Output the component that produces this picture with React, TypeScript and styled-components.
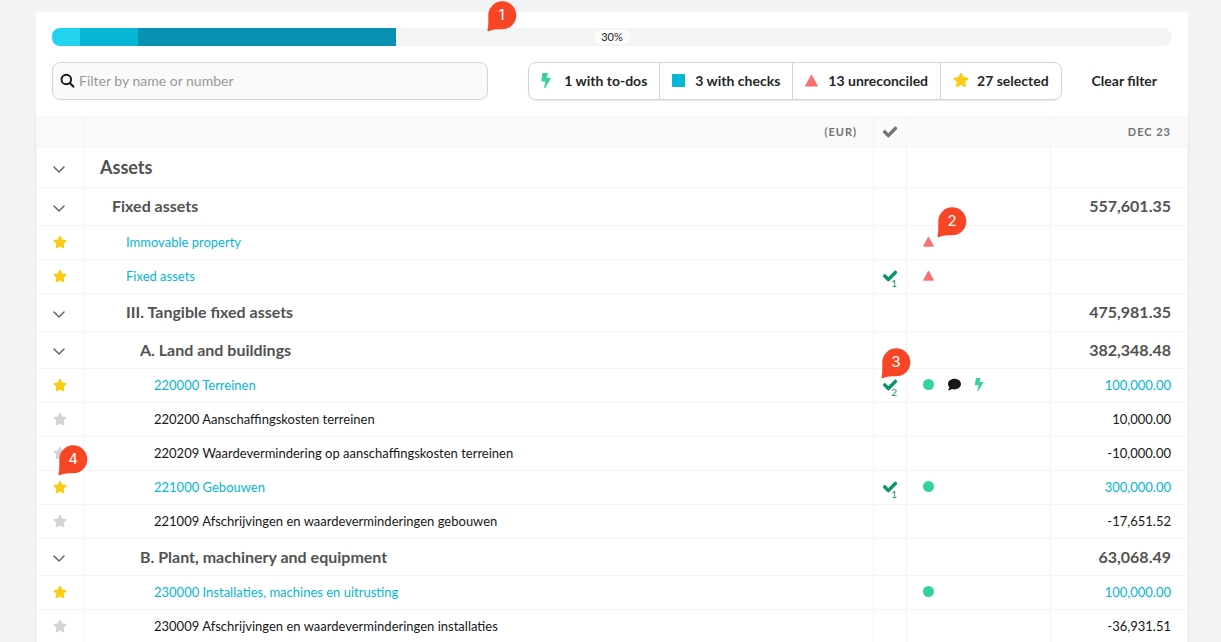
import React from "react";
import styled, { createGlobalStyle } from "styled-components";
import { FaCheck, FaComment, FaStar } from "react-icons/fa";

const colors = {
  page: "#f1f3f5",
  line: "#f4f4f4",
  border: "#d4d4d4",
  soft: "#fafafa",
  ink: "#262626",
  heading: "#525252",
  muted: "#737373",
  link: "#06b6d4",
  green: "#34d399",
  check: "#059669",
  red: "#f87171",
  yellow: "#facc15",
  pin: "#f84525",
};

const GlobalStyle = createGlobalStyle`
  *, *::before, *::after { box-sizing: border-box; }
  body {
    margin: 0;
    background: ${colors.page};
    color: ${colors.ink};
    font-family: Lato, "Liberation Sans", sans-serif;
    font-size: 14px;
  }
  button, input { font: inherit; color: inherit; }
`;

const Page = styled.main`
  padding: 12px 33px 0 36px;
  height: 100vh;
  overflow: hidden;
`;

const Card = styled.section`
  background: #fff;
`;

const Tools = styled.div`
  display: flex;
  flex-direction: column;
  gap: 16px;
  padding: 16px;
`;

const Progress = styled.div`
  position: relative;
  display: flex;
  height: 18px;
  border-radius: 9px;
  background: ${colors.line};
`;

const Segment = styled.span<{ $share: number; $color: string }>`
  width: ${(p) => p.$share}%;
  background: ${(p) => p.$color};
  &:first-child {
    border-radius: 8px 0 0 8px;
  }
`;

const Percent = styled.span`
  position: absolute;
  inset: 2px 0;
  margin: auto;
  width: 37px;
  border-radius: 7px;
  background: #fcfcfc;
  font-size: 11px;
  line-height: 14px;
  text-align: center;
`;

const Bar = styled.div`
  display: flex;
  height: 38px;
`;

const SearchBox = styled.label`
  flex: 1;
  display: flex;
  align-items: center;
  gap: 3px;
  margin-right: 40px;
  padding: 0 7px 2px;
  border: 1px solid ${colors.border};
  border-radius: 8px;
  background: ${colors.soft};
`;

const SearchInput = styled.input`
  flex: 1;
  min-width: 0;
  padding: 0;
  border: 0;
  outline: 0;
  background: transparent;
  font-size: 14px;
  &::placeholder {
    color: #999;
    opacity: 1;
  }
`;

const FilterGroup = styled.div`
  display: flex;
  border: 1px solid ${colors.border};
  border-radius: 8px;
  box-shadow: 0 1px 1px rgba(0, 0, 0, 0.08);
`;

const FilterButton = styled.button`
  display: flex;
  align-items: center;
  gap: 8px;
  padding: 0 12px 2px;
  border: 0;
  background: transparent;
  font-size: 14px;
  font-weight: 700;
  white-space: nowrap;
  & + & {
    border-left: 1px solid ${colors.border};
  }
`;

const FilterIcon = styled.span<{ $color: string }>`
  display: flex;
  min-width: 15px;
  color: ${(p) => p.$color};
`;

const ClearButton = styled.button`
  margin-left: 15px;
  padding: 0 15px 2px;
  border: 0;
  background: transparent;
  font-size: 14px;
  font-weight: 700;
  white-space: nowrap;
`;

const Ledger = styled.table`
  width: 100%;
  table-layout: fixed;
  border-collapse: separate;
  border-spacing: 0;
  border-top: 1px solid ${colors.line};
  border-left: 1px solid ${colors.line};
  box-shadow: 1px 0 0 #ebedef, -1px 0 0 #ebedef;
`;

const Col = styled.col<{ $width?: number }>`
  width: ${(p) => (p.$width ? `${p.$width}px` : "auto")};
`;

const HeadCell = styled.th<{ $align?: string }>`
  height: 31px;
  padding: 0 16px 1px;
  border-right: 1px solid ${colors.line};
  border-bottom: 1px solid ${colors.line};
  background: ${colors.soft};
  color: ${colors.muted};
  font-size: 11px;
  font-weight: 700;
  letter-spacing: 1px;
  text-align: ${(p) => p.$align ?? "left"};
  &:nth-child(3) {
    padding: 0;
  }
  svg {
    display: block;
    margin: 0 auto;
  }
`;

const Row = styled.tr<{ $height: number }>`
  height: ${(p) => p.$height}px;
`;

const Cell = styled.td`
  position: relative;
  padding: 0 0 2px;
  border-right: 1px solid ${colors.line};
  border-bottom: 1px solid ${colors.line};
`;

type Kind = "title" | "group" | "account";
const nameSize = { title: 18, group: 16, account: 13 };

const NameCell = styled(Cell)<{ $indent: number; $kind: Kind }>`
  padding-left: ${(p) => p.$indent}px;
  color: ${(p) => (p.$kind === "account" ? "#171717" : colors.heading)};
  font-size: ${(p) => nameSize[p.$kind]}px;
  font-weight: ${(p) => (p.$kind === "account" ? 400 : 700)};
  white-space: nowrap;
`;

const AmountCell = styled(Cell)<{ $kind: Kind; $linked?: boolean }>`
  padding-right: 16px;
  color: ${(p) =>
    p.$linked ? colors.link : p.$kind === "account" ? "#171717" : colors.heading};
  font-size: ${(p) => nameSize[p.$kind]}px;
  font-weight: ${(p) => (p.$kind === "account" ? 400 : 700)};
  text-align: right;
`;

const AccountLink = styled.a`
  color: ${colors.link};
  text-decoration: none;
`;

const RowButton = styled.button<{ $color: string }>`
  display: flex;
  margin: 0 auto;
  padding: 0;
  border: 0;
  background: transparent;
  color: ${(p) => p.$color};
`;

const CheckMark = styled.span`
  position: relative;
  display: flex;
  justify-content: center;
  color: ${colors.check};
`;

const CheckCount = styled.span`
  position: absolute;
  top: 8px;
  right: 9px;
  font-size: 10px;
  line-height: 12px;
`;

const Signals = styled.div`
  display: flex;
  align-items: center;
  gap: 14px;
  padding-left: 16px;
`;

const PinMark = styled.span<{ $left: string; $top: number }>`
  position: absolute;
  z-index: 1;
  left: ${(p) => p.$left};
  top: ${(p) => p.$top}px;
  width: 30px;
  height: 30px;
  color: #fff;
  font: 400 15px/28px Inter, sans-serif;
  text-align: center;
  svg {
    position: absolute;
    inset: 0;
    z-index: -1;
  }
`;

function Pin({ label, left, top }: { label: number; left: string; top: number }) {
  return (
    <PinMark $left={left} $top={top}>
      <svg width="30" height="30" viewBox="0 0 30 30" aria-hidden="true">
        <path
          d="M15.3 0.3a14 14 0 1 1 0 28c-5 0-9.500.2-13 1.600-1.500.6-2.300-.2-1.700-1.500C1.500 25 1.300 20 1.300 14.300a14 14 0 0 1 14-14z"
          fill={colors.pin}
        />
      </svg>
      {label}
    </PinMark>
  );
}

const SearchIcon = () => (
  <svg width="16" height="16" viewBox="0 0 16 16" fill="none" stroke="#171717" aria-hidden="true">
    <circle cx="6.300" cy="7.500" r="4.800" strokeWidth="1.900" />
    <path d="M9.800 11 13.300 14.500" strokeWidth="2.200" strokeLinecap="round" />
  </svg>
);

const Bolt = ({ width, height }: { width: number; height: number }) => (
  <svg
    width={width}
    height={height}
    viewBox="0 0 320 512"
    fill={colors.green}
    aria-hidden="true"
  >
    <path d="M296 160H180.600l42.600-129.800C227.200 15 215.700 0 200 0H56C44 0 33.800 8.900 32.200 20.800l-32 240C-1.700 275.200 9.500 288 24 288h118.700L96.600 482.500c-3.600 15.200 8 29.500 23.300 29.500 8.400 0 16.400-4.400 20.800-12l176-304c9.300-15.900-2.200-36-20.700-36z" />
  </svg>
);

const Triangle = ({ size = 11 }: { size?: number }) => (
  <svg width={size} height={size} viewBox="0 0 12 12" aria-hidden="true">
    <path
      d="M6 1.100 11.400 11.100H.6z"
      fill={colors.red}
      stroke={colors.red}
      strokeWidth="1"
      strokeLinejoin="round"
    />
  </svg>
);

const Square = () => (
  <svg width="13" height="13" viewBox="0 0 13 13" aria-hidden="true">
    <rect width="13" height="13" rx="1" fill={colors.link} />
  </svg>
);

const Dot = () => (
  <svg width="11" height="11" viewBox="0 0 11 11" aria-hidden="true">
    <circle cx="5.500" cy="5.500" r="5.500" fill={colors.green} />
  </svg>
);

const Chevron = () => (
  <svg width="14" height="14" viewBox="0 0 14 14" fill="none" aria-hidden="true">
    <path
      d="M1 7 6 12 11 7"
      stroke="#666"
      strokeWidth="1.500"
      strokeLinecap="round"
      strokeLinejoin="round"
    />
  </svg>
);

type Signal = "triangle" | "dot" | "comment" | "bolt";

const signalIcons: Record<Signal, React.ReactNode> = {
  triangle: <Triangle />,
  dot: <Dot />,
  comment: <FaComment size={13} color="#171717" />,
  bolt: <Bolt width={8} height={13} />,
};

interface Entry {
  kind: Kind;
  name: string;
  level: number;
  starred?: boolean;
  checks?: number;
  signals?: Signal[];
  amount?: string;
  pin?: { column: "star" | "check" | "signal"; label: number; left: number; top: number };
}

const entries: Entry[] = [
  { kind: "title", name: "Assets", level: 0 },
  { kind: "group", name: "Fixed assets", level: 1, amount: "557,601.35" },
  {
    kind: "account",
    name: "Immovable property",
    level: 2,
    starred: true,
    signals: ["triangle"],
    pin: { column: "signal", label: 2, left: 30, top: -19 },
  },
  { kind: "account", name: "Fixed assets", level: 2, starred: true, checks: 1, signals: ["triangle"] },
  { kind: "group", name: "III. Tangible fixed assets", level: 2, amount: "475,981.35" },
  { kind: "group", name: "A. Land and buildings", level: 3, amount: "382,348.48" },
  {
    kind: "account",
    name: "220000 Terreinen",
    level: 4,
    starred: true,
    checks: 2,
    signals: ["dot", "comment", "bolt"],
    amount: "100,000.00",
    pin: { column: "check", label: 3, left: 7, top: -21 },
  },
  { kind: "account", name: "220200 Aanschaffingskosten terreinen", level: 4, amount: "10,000.00" },
  {
    kind: "account",
    name: "220209 Waardevermindering op aanschaffingskosten terreinen",
    level: 4,
    amount: "-10,000.00",
  },
  {
    kind: "account",
    name: "221000 Gebouwen",
    level: 4,
    starred: true,
    checks: 1,
    signals: ["dot"],
    amount: "300,000.00",
    pin: { column: "star", label: 4, left: 21, top: -26 },
  },
  {
    kind: "account",
    name: "221009 Afschrijvingen en waardeverminderingen gebouwen",
    level: 4,
    amount: "-17,651.52",
  },
  { kind: "group", name: "B. Plant, machinery and equipment", level: 3, amount: "63,068.49" },
  {
    kind: "account",
    name: "230000 Installaties, machines en uitrusting",
    level: 4,
    starred: true,
    signals: ["dot"],
    amount: "100,000.00",
  },
  {
    kind: "account",
    name: "230009 Afschrijvingen en waardeverminderingen installaties",
    level: 4,
    amount: "-36,931.51",
  },
];

const indents = [16, 28, 42, 56, 70];

function rowHeight({ kind, level }: Entry) {
  if (kind === "title") return 40;
  if (kind === "group") return level > 2 ? 37 : 38;
  return 34;
}

function EntryRow({ entry }: { entry: Entry }) {
  const { kind, name, level, starred, checks, signals, amount, pin } = entry;
  const pinIn = (column: string) =>
    pin && pin.column === column ? (
      <Pin label={pin.label} left={`${pin.left}px`} top={pin.top} />
    ) : null;

  return (
    <Row $height={rowHeight(entry)}>
      <Cell>
        {kind === "account" ? (
          <RowButton
            type="button"
            $color={starred ? colors.yellow : colors.border}
            aria-label={`Select ${name}`}
            aria-pressed={!!starred}
          >
            <FaStar size={14} />
          </RowButton>
        ) : (
          <RowButton type="button" $color={colors.muted} aria-label={`Collapse ${name}`}>
            <Chevron />
          </RowButton>
        )}
        {pinIn("star")}
      </Cell>
      <NameCell $indent={indents[level]} $kind={kind}>
        {starred ? <AccountLink href="#">{name}</AccountLink> : name}
      </NameCell>
      <Cell>
        {checks && (
          <CheckMark>
            <FaCheck size={14} stroke="currentColor" strokeWidth={32} />
            <CheckCount>{checks}</CheckCount>
          </CheckMark>
        )}
        {pinIn("check")}
      </Cell>
      <Cell>
        {signals && (
          <Signals>
            {signals.map((signal) => (
              <React.Fragment key={signal}>{signalIcons[signal]}</React.Fragment>
            ))}
          </Signals>
        )}
        {pinIn("signal")}
      </Cell>
      <AmountCell $kind={kind} $linked={starred}>
        {amount}
      </AmountCell>
    </Row>
  );
}

const filters = [
  { label: "1 with to-dos", color: colors.green, icon: <Bolt width={10} height={15} /> },
  { label: "3 with checks", color: colors.link, icon: <Square /> },
  { label: "13 unreconciled", color: colors.red, icon: <Triangle size={13} /> },
  { label: "27 selected", color: colors.yellow, icon: <FaStar size={16} /> },
];

export default function App() {
  return (
    <>
      <GlobalStyle />
      <Page>
        <Card>
          <Tools>
            <Progress
              role="progressbar"
              aria-label="Progress"
              aria-valuenow={30}
              aria-valuemin={0}
              aria-valuemax={100}
            >
              <Segment $share={2.5} $color="#22d3ee" />
              <Segment $share={5.2} $color="#06b6d4" />
              <Segment $share={23} $color="#0891b2" />
              <Percent>30%</Percent>
              <Pin label={1} left="38.800%" top={-27} />
            </Progress>
            <Bar>
              <SearchBox>
                <SearchIcon />
                <SearchInput
                  type="text"
                  aria-label="Filter by name or number"
                  placeholder="Filter by name or number"
                />
              </SearchBox>
              <FilterGroup>
                {filters.map(({ label, color, icon }) => (
                  <FilterButton key={label} type="button">
                    <FilterIcon $color={color}>{icon}</FilterIcon>
                    {label}
                  </FilterButton>
                ))}
              </FilterGroup>
              <ClearButton type="button">Clear filter</ClearButton>
            </Bar>
          </Tools>
          <Ledger>
            <colgroup>
              <Col $width={47} />
              <Col />
              <Col $width={33} />
              <Col $width={144} />
              <Col $width={137} />
            </colgroup>
            <thead>
              <tr>
                <HeadCell />
                <HeadCell $align="right">(EUR)</HeadCell>
                <HeadCell aria-label="Checked">
                  <FaCheck size={14} stroke="currentColor" strokeWidth={32} />
                </HeadCell>
                <HeadCell />
                <HeadCell $align="right">DEC 23</HeadCell>
              </tr>
            </thead>
            <tbody>
              {entries.map((entry) => (
                <EntryRow key={entry.name + entry.kind} entry={entry} />
              ))}
            </tbody>
          </Ledger>
        </Card>
      </Page>
    </>
  );
}
